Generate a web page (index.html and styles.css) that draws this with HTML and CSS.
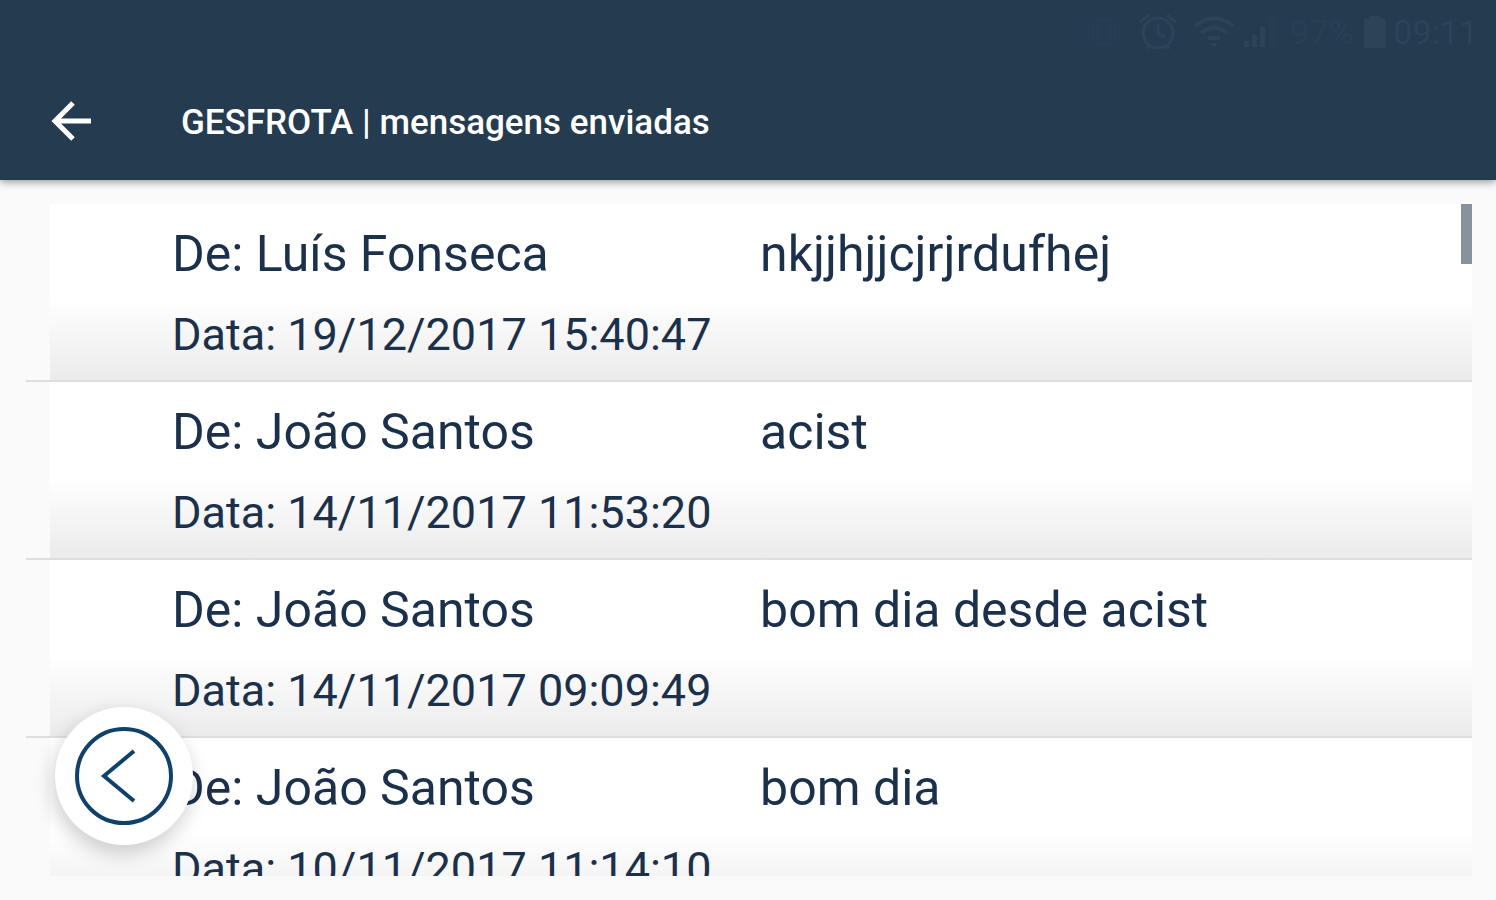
FILE: index.html
```
<!DOCTYPE html>
<html lang="pt">
<head>
  <meta charset="UTF-8">
  <meta name="viewport" content="width=device-width, initial-scale=1.0">
  <title>GESFROTA | mensagens enviadas</title>
  <link rel="stylesheet" href="styles.css">
</head>
<body>
  <header class="app-header">
    <!-- Status bar -->
    <div class="status-bar">
      <svg class="vibrate" width="40" height="34" viewBox="0 0 40 34" fill="none" stroke="currentColor" stroke-width="3" aria-hidden="true">
        <path d="M4 13v10M9 8v18M31 8v18M36 13v10M14 5h12v24H14z"/>
      </svg>
      <svg class="alarm" width="40" height="38" viewBox="0 0 40 38" fill="none" stroke="currentColor" stroke-width="3" aria-hidden="true">
        <circle cx="20" cy="20" r="15"/>
        <path d="M20 11v10l7 3M2 9l9-7M29 2l9 7M11 32l-2 4M29 32l2 4"/>
      </svg>
      <svg class="wifi" width="40" height="34" viewBox="0 0 40 34" fill="none" stroke="currentColor" stroke-width="4" aria-hidden="true">
        <path d="M1 11C12 1 28 1 39 11M7 18c8-7 18-7 26 0M14 23h12"/>
        <path d="M16 28h8l-4 5z" fill="currentColor" stroke="none"/>
      </svg>
      <svg class="signal" width="40" height="34" viewBox="0 0 40 34" fill="currentColor" aria-hidden="true">
        <path d="M2 26h5v6H2zM10 20h5v12h-5zM18 12h5v20h-5z"/>
        <path d="M27 2h7v30h-7z" opacity="0.3"/>
      </svg>
      <span class="battery-level">97%</span>
      <svg class="battery" width="24" height="34" viewBox="0 0 24 34" fill="currentColor" aria-hidden="true">
        <path d="M7 1h10v3h6v29H1V4h6z"/>
      </svg>
      <span class="clock">09:11</span>
    </div>

    <!-- Title bar -->
    <div class="title-bar">
      <button class="back-button" type="button" aria-label="Voltar">
        <svg width="42" height="42" viewBox="0 0 42 42" fill="none" stroke="currentColor" stroke-width="5" aria-hidden="true">
          <path d="M41 20H4M23 2L5 20l18 18"/>
        </svg>
      </button>
      <h1>GESFROTA | mensagens enviadas</h1>
    </div>
  </header>

  <main class="messages">
    <ul class="message-list">
      <li class="message">
        <div class="message-body">
          <p class="sender">De: Luís Fonseca</p>
          <p class="text">nkjjhjjcjrjrdufhej</p>
          <p class="date">Data: 19/12/2017 15:40:47</p>
        </div>
      </li>
      <li class="message">
        <div class="message-body">
          <p class="sender">De: João Santos</p>
          <p class="text">acist</p>
          <p class="date">Data: 14/11/2017 11:53:20</p>
        </div>
      </li>
      <li class="message">
        <div class="message-body">
          <p class="sender">De: João Santos</p>
          <p class="text">bom dia desde acist</p>
          <p class="date">Data: 14/11/2017 09:09:49</p>
        </div>
      </li>
      <li class="message">
        <div class="message-body">
          <p class="sender">De: João Santos</p>
          <p class="text">bom dia</p>
          <p class="date">Data: 10/11/2017 11:14:10</p>
        </div>
      </li>
    </ul>
    <div class="scroll-thumb"></div>
  </main>

  <button class="float-back" type="button" aria-label="Página anterior">
    <svg width="98" height="98" viewBox="0 0 98 98" fill="none" stroke="currentColor" stroke-width="4" aria-hidden="true">
      <circle cx="49" cy="49" r="47"/>
      <path d="M59 24L29 49l30 25"/>
    </svg>
  </button>
</body>
</html>
```
FILE: styles.css
```
/* Basic Reset */
* {
  margin: 0;
  padding: 0;
  box-sizing: border-box;
}

body {
  height: 100vh;
  display: flex;
  flex-direction: column;
  overflow: hidden;
  background-color: #fafafa;
  color: #1b304a;
  font-family: Roboto, sans-serif;
}

button {
  border: none;
  background: none;
  color: inherit;
  cursor: pointer;
}

svg {
  display: block;
}

/* Header */
.app-header {
  position: relative;
  height: 180px;
  background-color: #253b50;
  box-shadow: 0 2px 8px rgba(0, 0, 0, 0.4);
}

.status-bar {
  height: 64px;
  padding-right: 18px;
  display: flex;
  justify-content: flex-end;
  align-items: center;
  color: #2d4358;
  font-size: 34px;
}

.vibrate {
  opacity: 0.3;
  margin-right: 14px;
}

.alarm,
.battery {
  margin-right: 16px;
}

.wifi,
.signal {
  margin-right: 8px;
}

.battery {
  margin-right: 6px;
}

.battery-level {
  margin-right: 10px;
  opacity: 0.6;
}

.title-bar {
  height: 116px;
  padding: 0 50px;
  display: flex;
  align-items: center;
  gap: 89px;
  color: #fff;
}

.title-bar h1 {
  font-size: 35px;
  font-weight: 500;
}

/* Message List */
.messages {
  position: relative;
  flex: 1;
  min-height: 0;
  margin: 24px 24px 24px 26px;
  overflow: hidden;
}

.message-list {
  list-style: none;
}

.message {
  height: 178px;
  border-bottom: 2px solid #dedede;
}

.message-body {
  height: 100%;
  margin-left: 24px;
  padding: 12px 0 0 122px;
  display: grid;
  grid-template-columns: 19fr 23fr;
  grid-template-rows: 76px 84px;
  align-items: center;
  background: linear-gradient(#fff 54%, #ebebeb);
}

.sender,
.text {
  font-size: 50px;
}

.date {
  font-size: 45px;
}

.scroll-thumb {
  position: absolute;
  top: 0;
  right: 0;
  width: 11px;
  height: 60px;
  background-color: #87929d;
}

/* Floating Button */
.float-back {
  position: absolute;
  left: 55px;
  bottom: 55px;
  width: 138px;
  height: 138px;
  display: flex;
  justify-content: center;
  align-items: center;
  border-radius: 50%;
  background-color: #fff;
  color: #0f416a;
  box-shadow: -2px 8px 20px rgba(0, 0, 0, 0.2);
}
```
